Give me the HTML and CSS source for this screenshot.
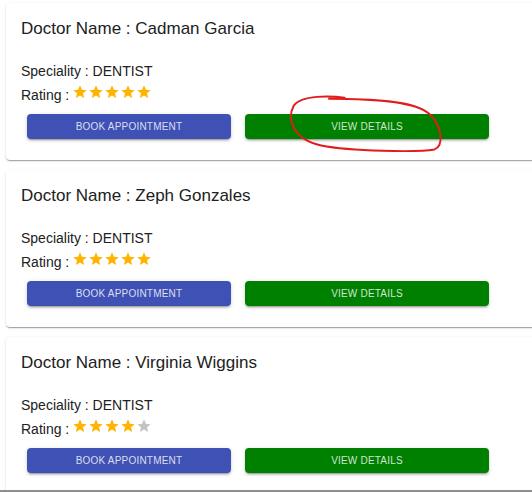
FILE: index.html
```html
<!DOCTYPE html>
<html lang="en">
<head>
<meta charset="utf-8">
<title>Doctors</title>
<link rel="stylesheet" href="styles.css">
</head>
<body>
<svg width="0" height="0" class="defs" aria-hidden="true">
  <defs>
    <path id="star" d="M12 17.27L18.18 21l-1.64-7.03L22 9.24l-7.19-.61L12 2 9.19 8.63 2 9.24l5.46 4.73L5.82 21z"/>
  </defs>
</svg>
<main class="list">
  <section class="card">
    <h2 class="name">Doctor Name : Cadman Garcia</h2>
    <p class="spec">Speciality : DENTIST</p>
    <div class="rating"><span>Rating :</span>
      <span class="stars">
        <svg class="star on" viewBox="0 0 24 24"><use href="#star"/></svg>
        <svg class="star on" viewBox="0 0 24 24"><use href="#star"/></svg>
        <svg class="star on" viewBox="0 0 24 24"><use href="#star"/></svg>
        <svg class="star on" viewBox="0 0 24 24"><use href="#star"/></svg>
        <svg class="star on" viewBox="0 0 24 24"><use href="#star"/></svg>
      </span>
    </div>
    <div class="actions">
      <button class="btn book">Book Appointment</button>
      <button class="btn view">View Details</button>
    </div>
    <svg class="scribble" viewBox="0 0 170 70" aria-hidden="true">
      <path d="M60 5 C46 3, 16 2, 8 13 C0 28, 8 48, 36 54 C66 60, 136 61, 152 58 C162 54, 160 33, 146 21 C131 8, 86 6, 44 6"/>
    </svg>
  </section>

  <section class="card">
    <h2 class="name">Doctor Name : Zeph Gonzales</h2>
    <p class="spec">Speciality : DENTIST</p>
    <div class="rating"><span>Rating :</span>
      <span class="stars">
        <svg class="star on" viewBox="0 0 24 24"><use href="#star"/></svg>
        <svg class="star on" viewBox="0 0 24 24"><use href="#star"/></svg>
        <svg class="star on" viewBox="0 0 24 24"><use href="#star"/></svg>
        <svg class="star on" viewBox="0 0 24 24"><use href="#star"/></svg>
        <svg class="star on" viewBox="0 0 24 24"><use href="#star"/></svg>
      </span>
    </div>
    <div class="actions">
      <button class="btn book">Book Appointment</button>
      <button class="btn view">View Details</button>
    </div>
  </section>

  <section class="card">
    <h2 class="name">Doctor Name : Virginia Wiggins</h2>
    <p class="spec">Speciality : DENTIST</p>
    <div class="rating"><span>Rating :</span>
      <span class="stars">
        <svg class="star on" viewBox="0 0 24 24"><use href="#star"/></svg>
        <svg class="star on" viewBox="0 0 24 24"><use href="#star"/></svg>
        <svg class="star on" viewBox="0 0 24 24"><use href="#star"/></svg>
        <svg class="star on" viewBox="0 0 24 24"><use href="#star"/></svg>
        <svg class="star off" viewBox="0 0 24 24"><use href="#star"/></svg>
      </span>
    </div>
    <div class="actions">
      <button class="btn book">Book Appointment</button>
      <button class="btn view">View Details</button>
    </div>
  </section>
</main>
<div class="edge"></div>
</body>
</html>
```

FILE: styles.css
```css
html, body {
  margin: 0;
  padding: 0;
  background: #ffffff;
  overflow: hidden;
  height: 492px;
}
body {
  font-family: "Liberation Sans", Arial, sans-serif;
  color: #212121;
}
.defs {
  position: absolute;
  width: 0;
  height: 0;
}
.list {
  display: flex;
  flex-direction: column;
  gap: 10px;
  padding: 3px 0 0 6px;
  overflow: hidden;
}
.card {
  position: relative;
  width: calc(100% + 20px);
  flex: none;
  box-sizing: border-box;
  padding: 16px 0 21px 15px;
  background: #fff;
  border-radius: 4px;
  box-shadow: 0 2px 1px -1px rgba(0,0,0,.2), 0 1px 1px 0 rgba(0,0,0,.14), 0 1px 3px 0 rgba(0,0,0,.12);
}
.name {
  margin: 0;
  font-size: 17px;
  font-weight: 400;
  line-height: 20px;
}
.spec {
  margin: 22px 0 0;
  font-size: 14px;
  line-height: 20px;
}
.rating {
  display: flex;
  align-items: flex-start;
  margin-top: 4px;
  font-size: 14px;
  line-height: 20px;
  height: 20px;
}
.stars {
  display: flex;
  margin-left: 3px;
  margin-top: -1px;
}
.star {
  width: 16px;
  height: 16px;
  display: block;
}
.star.on { fill: #ffb400; }
.star.off { fill: #c4c4c4; }
.actions {
  display: flex;
  gap: 14px;
  margin-top: 9px;
  padding-left: 6px;
}
.btn {
  height: 25px;
  border: 0;
  border-radius: 4px;
  font-family: "Liberation Sans", Arial, sans-serif;
  font-size: 10px;
  text-transform: uppercase;
  letter-spacing: 0.2px;
  color: rgba(255,255,255,0.82);
  box-shadow: 0 3px 1px -2px rgba(0,0,0,.2), 0 2px 2px 0 rgba(0,0,0,.14), 0 1px 5px 0 rgba(0,0,0,.12);
  padding: 0;
}
.book {
  width: 204px;
  background: #3f51b5;
}
.view {
  width: 244px;
  background: #008000;
}
.scribble {
  position: absolute;
  left: 280px;
  top: 89px;
  width: 166px;
  height: 70px;
  overflow: visible;
}
.scribble path {
  fill: none;
  stroke: #e01c1c;
  stroke-width: 2;
  stroke-linecap: round;
}
.edge {
  position: fixed;
  left: 0;
  right: 0;
  bottom: 0;
  height: 2px;
  background: #8e8e8e;
}
```
